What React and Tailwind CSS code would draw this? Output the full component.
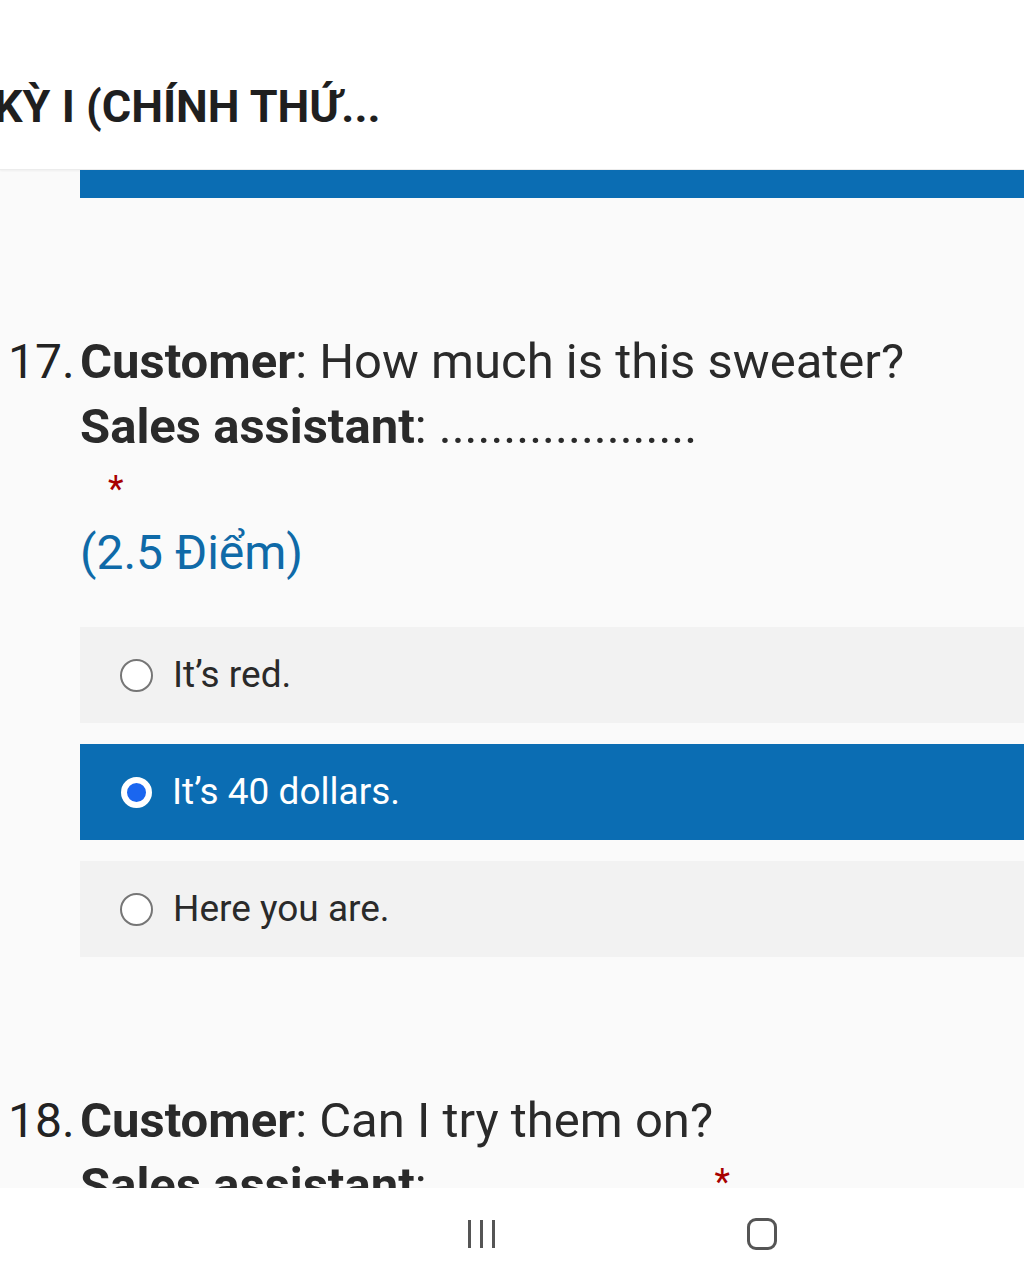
export default function App() {
  const font = { fontFamily: 'Roboto, "Noto Sans", sans-serif' };
  return (
    <div className="w-[1024px] h-[1280px] flex flex-col bg-[#fafafa] overflow-hidden" style={font}>
      <div className="h-[1188px] flex flex-col overflow-hidden">
        <div className="h-[170px] shrink-0 bg-white flex items-center border-b border-[#ececec] shadow-[0_1px_2px_rgba(0,0,0,0.05)]">
          <div className="ml-[-6px] pt-[44px] text-[45px] font-bold text-[#1f1f1f] whitespace-nowrap leading-[56px]">KỲ I (CHÍNH THỨ...</div>
        </div>
        <div className="ml-[80px] h-[28px] shrink-0 bg-[#0b6db3]"></div>

        <div className="mt-[136px] flex">
          <div className="w-[80px] pl-[8px] text-[48px] leading-[56px] text-[#222]">17.</div>
          <div className="flex-1">
            <div className="text-[49px] leading-[56px] text-[#2a2a2a] whitespace-nowrap">
              <span className="font-bold">Customer</span>: How much is this sweater?
            </div>
            <div className="mt-[9px] text-[49px] leading-[56px] text-[#2a2a2a] whitespace-nowrap">
              <span className="font-bold">Sales assistant</span>: ....................
            </div>
            <div className="mt-[14px] ml-[28px] text-[36px] leading-[40px] text-[#a80000]">*</div>
            <div className="mt-[16px] text-[48px] leading-[56px] text-[#0f6aa8]">(2.5 Điểm)</div>
          </div>
        </div>

        <div className="mt-[46px] ml-[80px] flex flex-col gap-[21px]">
          <div className="h-[96px] bg-[#f2f2f2] flex items-center pl-[40px] gap-[20px]">
            <div className="w-[33px] h-[33px] rounded-full border-2 border-[#767676] bg-white"></div>
            <div className="text-[37px] text-[#2a2a2a]">It’s red.</div>
          </div>
          <div className="h-[96px] bg-[#0b6db3] flex items-center pl-[41px] gap-[20px]">
            <div className="w-[31px] h-[31px] rounded-full border-[6px] border-white bg-[#1a66f0]"></div>
            <div className="text-[37px] text-white">It’s 40 dollars.</div>
          </div>
          <div className="h-[96px] bg-[#f2f2f2] flex items-center pl-[40px] gap-[20px]">
            <div className="w-[33px] h-[33px] rounded-full border-2 border-[#767676] bg-white"></div>
            <div className="text-[37px] text-[#2a2a2a]">Here you are.</div>
          </div>
        </div>

        <div className="mt-[136px] flex">
          <div className="w-[80px] pl-[8px] text-[48px] leading-[56px] text-[#222]">18.</div>
          <div className="flex-1">
            <div className="text-[49px] leading-[56px] text-[#2a2a2a] whitespace-nowrap">
              <span className="font-bold">Customer</span>: Can I try them on?
            </div>
            <div className="mt-[9px] flex items-start text-[49px] leading-[56px] text-[#2a2a2a] whitespace-nowrap">
              <span><span className="font-bold">Sales assistant</span>:</span>
              <span className="ml-[288px] mt-[4px] text-[36px] leading-[40px] text-[#a80000]">*</span>
            </div>
          </div>
        </div>
      </div>

      <div className="flex-1 bg-white flex items-center">
        <div className="ml-[468px] flex gap-[9px] h-[28px]">
          <div className="w-[3px] h-full bg-[#555]"></div>
          <div className="w-[3px] h-full bg-[#555]"></div>
          <div className="w-[3px] h-full bg-[#555]"></div>
        </div>
        <div className="ml-[252px] w-[30px] h-[32px] rounded-[9px] border-[3px] border-[#555]"></div>
      </div>
    </div>
  );
}
